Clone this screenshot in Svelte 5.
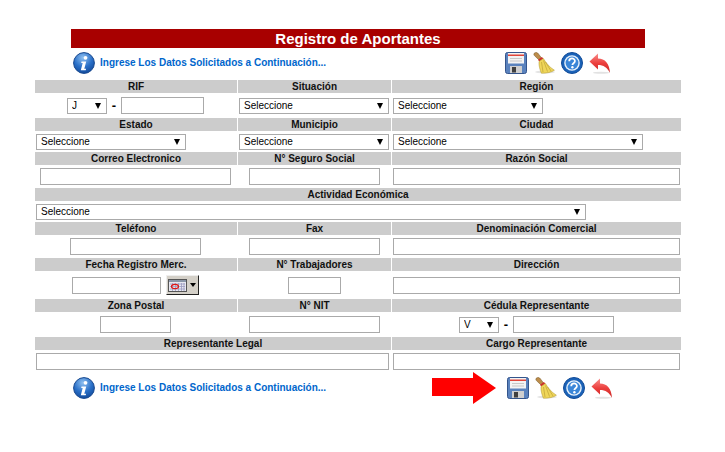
<script>
    const placeholder = "Seleccione";
    const infoText = "Ingrese Los Datos Solicitados a Continuación...";
</script>

{#snippet info()}
    <svg class="icon" viewBox="0 0 22 22" width="22" height="22">
        <defs>
            <radialGradient id="infoFill" cx="45%" cy="25%" r="80%">
                <stop offset="0" stop-color="#8fc0f0" />
                <stop offset="0.55" stop-color="#2a70c8" />
                <stop offset="1" stop-color="#0f4696" />
            </radialGradient>
        </defs>
        <circle cx="11" cy="11" r="10.400" fill="url(#infoFill)" stroke="#17488f" stroke-width="1" />
        <circle cx="12.500" cy="5.800" r="1.900" fill="#fff" />
        <path d="M8.500 9.500h4.700l-1.900 7.300h1.800l-.4 1.500H7.800l1.900-7.300H8.200z" fill="#fff" />
    </svg>
{/snippet}

{#snippet actions()}
    <svg class="icon" viewBox="0 0 22 22" width="22" height="22">
        <rect x="0.500" y="0.500" width="21" height="21" rx="2" fill="#5a82bd" stroke="#34558c" />
        <rect x="3" y="1" width="16" height="10.500" fill="#f3f3f3" />
        <rect x="3" y="2.500" width="16" height="1.500" fill="#e0453a" />
        <rect x="5" y="6" width="12" height="1" fill="#c8c8c8" />
        <rect x="5" y="8.500" width="12" height="1" fill="#c8c8c8" />
        <rect x="5" y="14" width="12" height="7" fill="#cfcfcf" />
        <rect x="7" y="15" width="4" height="5.500" fill="#3f3f3f" />
    </svg>
    <svg class="icon" viewBox="0 0 22 22" width="22" height="22">
        <ellipse cx="12" cy="20" rx="10" ry="1.500" fill="#e4e4e4" />
        <path d="M1 1.500C2.500 0 4.500 .3 5.500 2l3 4-2.600 1.800L2.300 4.500C1.300 3.600.5 2.500 1 1.500z" fill="#bd8d4b" stroke="#80602f" stroke-width=".6" />
        <path d="M5 7.800l4-2.800 1.300 1.700-4.100 2.900z" fill="#d1302a" />
        <path d="M6 9.500l4.400-3c2.300 4 6 8.700 11 11.700-3 2-7.500 3.200-13 3C6.800 17.500 5.700 13.500 6 9.500z" fill="#efd65a" stroke="#ab922f" stroke-width=".5" />
        <path d="M8.500 10l1.500 10M10.500 8.500l4 11M12.500 10l5.500 9" stroke="#bda237" stroke-width=".7" fill="none" />
    </svg>
    <svg class="icon" viewBox="0 0 22 22" width="22" height="22">
        <circle cx="11" cy="11" r="10.500" fill="#1a62b8" stroke="#124c98" />
        <circle cx="11" cy="11" r="7.800" fill="#e8f2fb" />
        <circle cx="11" cy="11" r="6.400" fill="#3a86d8" />
        <path d="M8.200 9.200c0-3.600 5.700-3.600 5.700-.2 0 2.200-2.500 2.200-2.500 4" fill="none" stroke="#fff" stroke-width="1.800" />
        <circle cx="11.400" cy="15.300" r="1.200" fill="#fff" />
    </svg>
    <svg class="icon" viewBox="0 0 22 22" width="22" height="22">
        <defs>
            <linearGradient id="backFill" x1="0" y1="0" x2="0" y2="1">
                <stop offset="0" stop-color="#f98d8b" />
                <stop offset="0.5" stop-color="#ec3f3d" />
                <stop offset="1" stop-color="#c92725" />
            </linearGradient>
        </defs>
        <ellipse cx="12" cy="20.800" rx="8" ry="1" fill="#e2e2e2" />
        <path d="M.5 9.500L9 1.500v5c7 0 11.500 5 12 14.500-2.700-5.500-6.500-8-12-8v4.500z" fill="url(#backFill)" />
    </svg>
{/snippet}

{#snippet combo(width, value = placeholder)}
    <span class="combo" style="width: {width}px">
        <select><option>{value}</option></select>
    </span>
{/snippet}

<main>
    <h1>Registro de Aportantes</h1>

    <div class="notice top">
        <div class="message">
            {@render info()}
            <a href="#top">{infoText}</a>
        </div>
        <div class="tools">{@render actions()}</div>
    </div>

    <div class="form">
        <div class="head">RIF</div>
        <div class="head">Situación</div>
        <div class="head">Región</div>

        <div class="cell r1 center first">
            {@render combo(40, "J")}
            <b class="dash">-</b>
            <input style="width: 83px" />
        </div>
        <div class="cell r1">{@render combo(150)}</div>
        <div class="cell r1">{@render combo(150)}</div>

        <div class="head">Estado</div>
        <div class="head">Municipio</div>
        <div class="head">Ciudad</div>

        <div class="cell r2">{@render combo(150)}</div>
        <div class="cell r2">{@render combo(150)}</div>
        <div class="cell r2">{@render combo(250)}</div>

        <div class="head">Correo Electronico</div>
        <div class="head">N° Seguro Social</div>
        <div class="head">Razón Social</div>

        <div class="cell r3 center first"><input style="width: 191px" /></div>
        <div class="cell r3 center"><input style="width: 131px" /></div>
        <div class="cell r3"><input style="width: 287px" /></div>

        <div class="head wide">Actividad Económica</div>
        <div class="cell r2 wide">{@render combo(550)}</div>

        <div class="head">Teléfono</div>
        <div class="head">Fax</div>
        <div class="head">Denominación Comercial</div>

        <div class="cell r3 center first"><input style="width: 131px" /></div>
        <div class="cell r3 center"><input style="width: 131px" /></div>
        <div class="cell r3"><input style="width: 287px" /></div>

        <div class="head">Fecha Registro Merc.</div>
        <div class="head">N° Trabajadores</div>
        <div class="head">Dirección</div>

        <div class="cell r4 center first">
            <input style="width: 89px" />
            <button class="calendar" aria-label="Calendario">
                <svg viewBox="0 0 19 13" width="19" height="13">
                    <rect x="0.500" y="0.500" width="18" height="12" fill="#e8e8f0" stroke="#555" />
                    <rect x="1" y="1" width="17" height="2" fill="#8a96a8" />
                    <path d="M2 5h15M2 7.500h15M2 10h15M4.500 4v8M7.500 4v8M10.500 4v8M13.500 4v8M16 4v8" stroke="#9a9ac0" stroke-width=".8" />
                    <ellipse cx="7" cy="7.500" rx="3.500" ry="2.200" fill="none" stroke="#e01818" stroke-width="1.200" />
                </svg>
                <i></i>
            </button>
        </div>
        <div class="cell r4 center"><input style="width: 53px" /></div>
        <div class="cell r4"><input style="width: 287px" /></div>

        <div class="head">Zona Postal</div>
        <div class="head">N° NIT</div>
        <div class="head">Cédula Representante</div>

        <div class="cell r5 center first"><input style="width: 71px" /></div>
        <div class="cell r5 center"><input style="width: 131px" /></div>
        <div class="cell r5 center">
            {@render combo(40, "V")}
            <b class="dash">-</b>
            <input style="width: 101px" />
        </div>

        <div class="head double">Representante Legal</div>
        <div class="head">Cargo Representante</div>

        <div class="cell r3 double"><input style="width: 353px" /></div>
        <div class="cell r3"><input style="width: 287px" /></div>
    </div>

    <div class="notice bottom">
        <div class="message">
            {@render info()}
            <a href="#top">{infoText}</a>
        </div>
        <div class="tools">
            <svg class="arrow" viewBox="0 0 64 32" width="64" height="32">
                <path d="M0 6h41V0l23 16-23 16v-8H0z" fill="#f00" />
            </svg>
            {@render actions()}
        </div>
    </div>
</main>

<style>
    :global(body) {
        background: #fff;
    }

    main {
        width: 725px;
        height: 452px;
        box-sizing: border-box;
        padding-top: 29px;
        font-family: "Liberation Sans", Arial, sans-serif;
        font-size: 10px;
        color: #000;
    }

    h1 {
        width: 574px;
        height: 19px;
        margin: 0 0 0 71px;
        background: #a80000;
        color: #fff;
        font-size: 15px;
        line-height: 20px;
        text-align: center;
    }

    .notice {
        display: flex;
        align-items: center;
        box-sizing: border-box;
        padding-left: 73px;
    }

    .notice.top {
        height: 32px;
        padding-bottom: 3px;
    }

    .notice.bottom {
        height: 30px;
        padding-bottom: 1px;
    }

    .message {
        display: flex;
        align-items: center;
        gap: 5px;
    }

    .message a {
        color: #0066cc;
        font-weight: bold;
        text-decoration: none;
    }

    .tools {
        display: flex;
        align-items: center;
        gap: 6px;
        margin-left: auto;
        padding-right: 114px;
    }

    .bottom .tools {
        padding-right: 112px;
    }

    .arrow {
        margin-right: 5px;
    }

    .icon {
        display: block;
        flex: none;
    }

    .form {
        display: grid;
        grid-template-columns: 202px 153px 289px;
        column-gap: 1px;
        width: 646px;
        margin-left: 35px;
    }

    .head {
        height: 13px;
        background: #cccccc;
        font-weight: bold;
        line-height: 14px;
        text-align: center;
        color: #111;
    }

    .wide {
        grid-column: 1 / 4;
    }

    .double {
        grid-column: 1 / 3;
    }

    .cell {
        display: flex;
        align-items: center;
        padding-left: 1px;
    }

    .center {
        justify-content: center;
        padding-left: 0;
    }

    .first {
        padding-right: 1px;
    }

    .r1 { height: 25px; }
    .r2 { height: 21px; }
    .r3 { height: 23px; }
    .r4 { height: 28px; }
    .r5 { height: 25px; }

    input {
        display: block;
        box-sizing: border-box;
        height: 17px;
        padding: 0;
        margin: 0;
        border: 1px solid #aaaaaa;
        background: #fff;
        outline: none;
    }

    .combo {
        position: relative;
        display: block;
        flex: none;
    }

    .combo::after {
        content: "";
        position: absolute;
        right: 6px;
        top: 5px;
        border-style: solid;
        border-width: 6px 3.500px 0;
        border-color: #000 transparent transparent;
        pointer-events: none;
    }

    select {
        appearance: none;
        display: block;
        box-sizing: border-box;
        width: 100%;
        height: 16px;
        margin: 0;
        padding: 0 0 0 4px;
        border: 1px solid #aaaaaa;
        border-radius: 0;
        background: #fff;
        color: #000;
        font: 10px "Liberation Sans", Arial, sans-serif;
        outline: none;
    }

    .dash {
        width: 14px;
        font-size: 13px;
        text-align: center;
    }

    .calendar {
        display: flex;
        align-items: center;
        gap: 3px;
        box-sizing: border-box;
        width: 33px;
        height: 20px;
        margin-left: 5px;
        padding: 0 0 0 1px;
        background: #d4d0c8;
        border: 1px solid;
        border-color: #eee #222 #222 #eee;
    }

    .calendar i {
        border-style: solid;
        border-width: 4px 3.500px 0;
        border-color: #000 transparent transparent;
    }
</style>
